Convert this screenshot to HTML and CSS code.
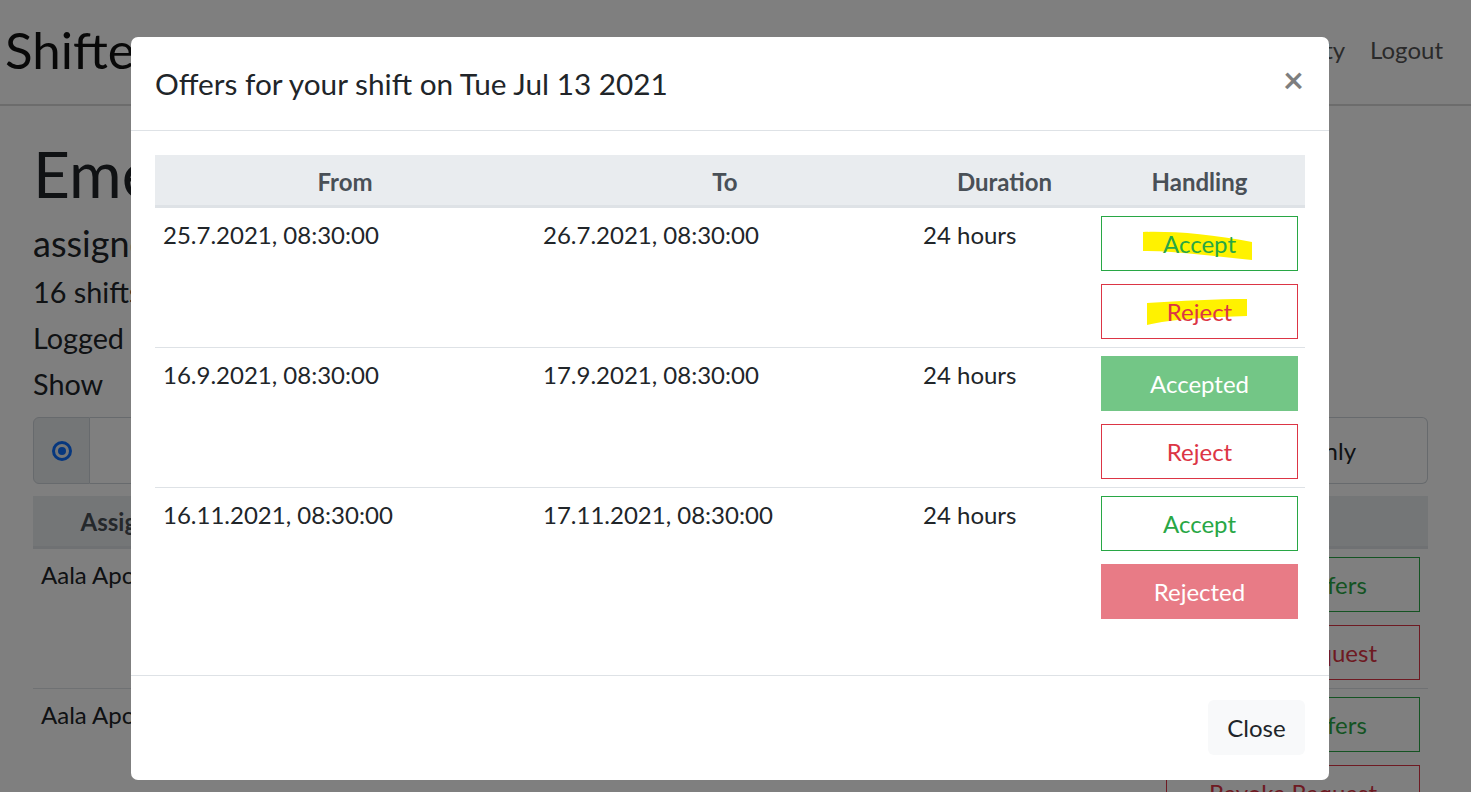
FILE: index.html
```html
<!DOCTYPE html>
<html lang="en">
<head>
<meta charset="utf-8">
<title>Shiftex</title>
<link rel="stylesheet" href="styles.css">
</head>
<body>
<div class="page">
  <nav class="navbar">
    <span class="brand">Shiftex</span>
    <div class="nav-links">
      <a class="nav-link">Shifts</a>
      <a class="nav-link">Availability</a>
      <a class="nav-link">Logout</a>
    </div>
  </nav>
  <main class="container">
    <h1 class="page-title">Emergency Service</h1>
    <h3 class="page-sub">assigned to Aala Apotheke</h3>
    <p class="page-line">16 shifts in total</p>
    <p class="page-line">Logged in as Aala Apotheke</p>
    <p class="page-line last">Show</p>
    <div class="btn-group">
      <span class="ig-radio"><span class="radio"></span></span>
      <span class="seg">All shifts or my shifts only</span>
    </div>
    <table class="bg-table">
      <thead>
        <tr><th class="bg-col1">Assigned to</th><th>Date</th><th>Duration</th><th class="bg-colh"></th></tr>
      </thead>
      <tbody>
        <tr>
          <td>Aala Apotheke</td><td>13.7.2021</td><td>24 hours</td>
          <td class="bg-handle"><button class="btn btn-og">Handle Offers</button><button class="btn btn-or">Revoke Request</button></td>
        </tr>
        <tr>
          <td>Aala Apotheke</td><td>20.7.2021</td><td>24 hours</td>
          <td class="bg-handle"><button class="btn btn-og">Handle Offers</button><button class="btn btn-or">Revoke Request</button></td>
        </tr>
      </tbody>
    </table>
  </main>
</div>

<div class="backdrop"></div>

<div class="modal">
  <div class="modal-header">
    <h5 class="modal-title">Offers for your shift on Tue Jul 13 2021</h5>
    <span class="close">&times;</span>
  </div>
  <div class="modal-body">
    <table class="offers">
      <colgroup>
        <col class="c-from"><col class="c-to"><col class="c-dur"><col class="c-hand">
      </colgroup>
      <thead>
        <tr><th>From</th><th>To</th><th>Duration</th><th>Handling</th></tr>
      </thead>
      <tbody>
        <tr>
          <td>25.7.2021, 08:30:00</td>
          <td>26.7.2021, 08:30:00</td>
          <td>24 hours</td>
          <td class="handle">
            <button class="btn btn-og"><svg class="hl" viewBox="0 0 197 55" width="197" height="55"><path d="M42 16 C70 15 110 18 151 26 L151 44 C110 40 75 35 42 35 Z" fill="#fff200"/></svg><span class="lbl">Accept</span></button>
            <button class="btn btn-or"><svg class="hl" viewBox="0 0 197 55" width="197" height="55"><path d="M46 19 C80 17 115 15 146 15 L146 32 C110 33 70 35 46 41 Z" fill="#fff200"/></svg><span class="lbl">Reject</span></button>
          </td>
        </tr>
        <tr>
          <td>16.9.2021, 08:30:00</td>
          <td>17.9.2021, 08:30:00</td>
          <td>24 hours</td>
          <td class="handle">
            <button class="btn btn-sd">Accepted</button>
            <button class="btn btn-or">Reject</button>
          </td>
        </tr>
        <tr>
          <td>16.11.2021, 08:30:00</td>
          <td>17.11.2021, 08:30:00</td>
          <td>24 hours</td>
          <td class="handle">
            <button class="btn btn-og">Accept</button>
            <button class="btn btn-dd">Rejected</button>
          </td>
        </tr>
      </tbody>
    </table>
  </div>
  <div class="modal-footer">
    <button class="btn-light">Close</button>
  </div>
</div>
</body>
</html>
```
FILE: styles.css
```css
* { box-sizing: border-box; }
html, body { margin: 0; padding: 0; }
body {
  font-family: Lato, "Open Sans", sans-serif;
  font-size: 24px;
  line-height: 36px;
  color: #212529;
  background: #fff;
  width: 1471px;
  height: 792px;
  overflow: hidden;
}

/* ---------- background page ---------- */
.navbar {
  height: 106px;
  display: flex;
  align-items: center;
  justify-content: space-between;
  padding: 0 28px 4px 5px;
  border-bottom: 2px solid #d8d8d8;
}
.brand { font-size: 51px; line-height: 60px; color: #111; }
.nav-links { display: flex; gap: 25px; }
.nav-link { color: #555; font-size: 24px; }

.container { padding: 0 43px 0 33px; }
.page-title { font-size: 64px; line-height: 77px; font-weight: 400; margin: 29px 0 10px; white-space: nowrap; }
.page-sub { font-size: 36px; line-height: 43px; font-weight: 400; margin: 0 0 10px; white-space: nowrap; }
.page-line { font-size: 28.8px; line-height: 35px; margin: 0 0 11px; white-space: nowrap; }
.page-line.last { margin-bottom: 15px; }

.btn-group { display: flex; height: 67px; margin-bottom: 12px; }
.ig-radio {
  width: 57px;
  display: flex; align-items: center; justify-content: center;
  background: #e9ecef;
  border: 1px solid #ced4da;
  border-radius: 6px 0 0 6px;
}
.radio {
  width: 20px; height: 20px; border-radius: 50%;
  border: 3px solid #0d6efd;
  display: flex; align-items: center; justify-content: center;
}
.radio::after { content: ""; width: 8px; height: 8px; border-radius: 50%; background: #0d6efd; }
.seg {
  flex: 1;
  display: flex; align-items: center; justify-content: flex-end;
  padding-right: 71px;
  border: 1px solid #ced4da; border-left: 0;
  border-radius: 0 6px 6px 0;
  font-size: 24px;
}

.bg-table { width: 100%; border-collapse: collapse; }
.bg-table th {
  background: #e9ecef; color: #495057; font-weight: 700; text-align: center;
  padding: 8px 8px 6px; border-bottom: 3px solid #dee2e6;
}
.bg-table .bg-col1 { width: 220px; }
.bg-table .bg-colh { width: 270px; }
.bg-table td { padding: 8px 8px 8px; vertical-align: top; border-top: 1px solid #dee2e6; white-space: nowrap; }
.bg-table tbody tr:first-child td { border-top: 0; }
.bg-handle .btn { width: 254px; }

/* ---------- backdrop ---------- */
.backdrop { position: fixed; inset: 0; background: rgba(0, 0, 0, 0.5); }

/* ---------- modal ---------- */
.modal {
  position: absolute;
  left: 131px; top: 37px;
  width: 1198px; height: 743px;
  background: #fff;
  border-radius: 7px;
  display: flex; flex-direction: column;
}
.modal-header {
  height: 94px;
  flex: none;
  display: flex; align-items: center; justify-content: space-between;
  padding: 0 25px 0 24px;
  border-bottom: 1px solid #dee2e6;
}
.modal-title { margin: 0; font-size: 29.75px; line-height: 36px; font-weight: 400; color: #212529; }
.close { font-size: 36px; font-weight: 700; color: #000; opacity: 0.5; line-height: 36px; margin-bottom: 10px; }

.modal-body { flex: 1; padding: 24px 24px 0; }
.offers { width: 1150px; border-collapse: collapse; table-layout: fixed; }
.c-from, .c-to { width: 380px; }
.c-dur { width: 179px; }
.c-hand { width: 211px; }
.offers th {
  background: #e9ecef; color: #495057; font-weight: 700; text-align: center;
  padding: 9px 7px 5px; border-bottom: 3px solid #dee2e6;
}
.offers td { padding: 9px 8px 7px; vertical-align: top; text-align: left; border-top: 1px solid #dee2e6; }
.offers tbody tr:first-child td { border-top: 0; }
.offers td.handle { padding: 8px 7px 8px; }

.btn {
  position: relative;
  display: block;
  width: 100%;
  height: 55px;
  margin: 0 0 13px;
  padding: 0;
  font-family: Lato, "Open Sans", sans-serif;
  font-size: 24px;
  line-height: 36px;
  background: #fff;
  border: 1px solid transparent;
  border-radius: 0;
}
.btn:last-child { margin-bottom: 0; }
.btn-og { color: #28a745; border-color: #28a745; }
.btn-or { color: #dc3545; border-color: #dc3545; }
.btn-sd { color: #fff; background: #73c686; border-color: #73c686; }
.btn-dd { color: #fff; background: #e87b86; border-color: #e87b86; }
.hl { position: absolute; left: -1px; top: -1px; }
.lbl { position: relative; }

.modal-footer {
  height: 105px;
  flex: none;
  display: flex; justify-content: flex-end; align-items: flex-start;
  padding: 24px 24px 0;
  border-top: 1px solid #dee2e6;
}
.btn-light {
  width: 97px; height: 55px;
  background: #f8f9fa; color: #212529;
  border: 0; border-radius: 6px;
  font-family: Lato, "Open Sans", sans-serif;
  font-size: 24px;
}
```
